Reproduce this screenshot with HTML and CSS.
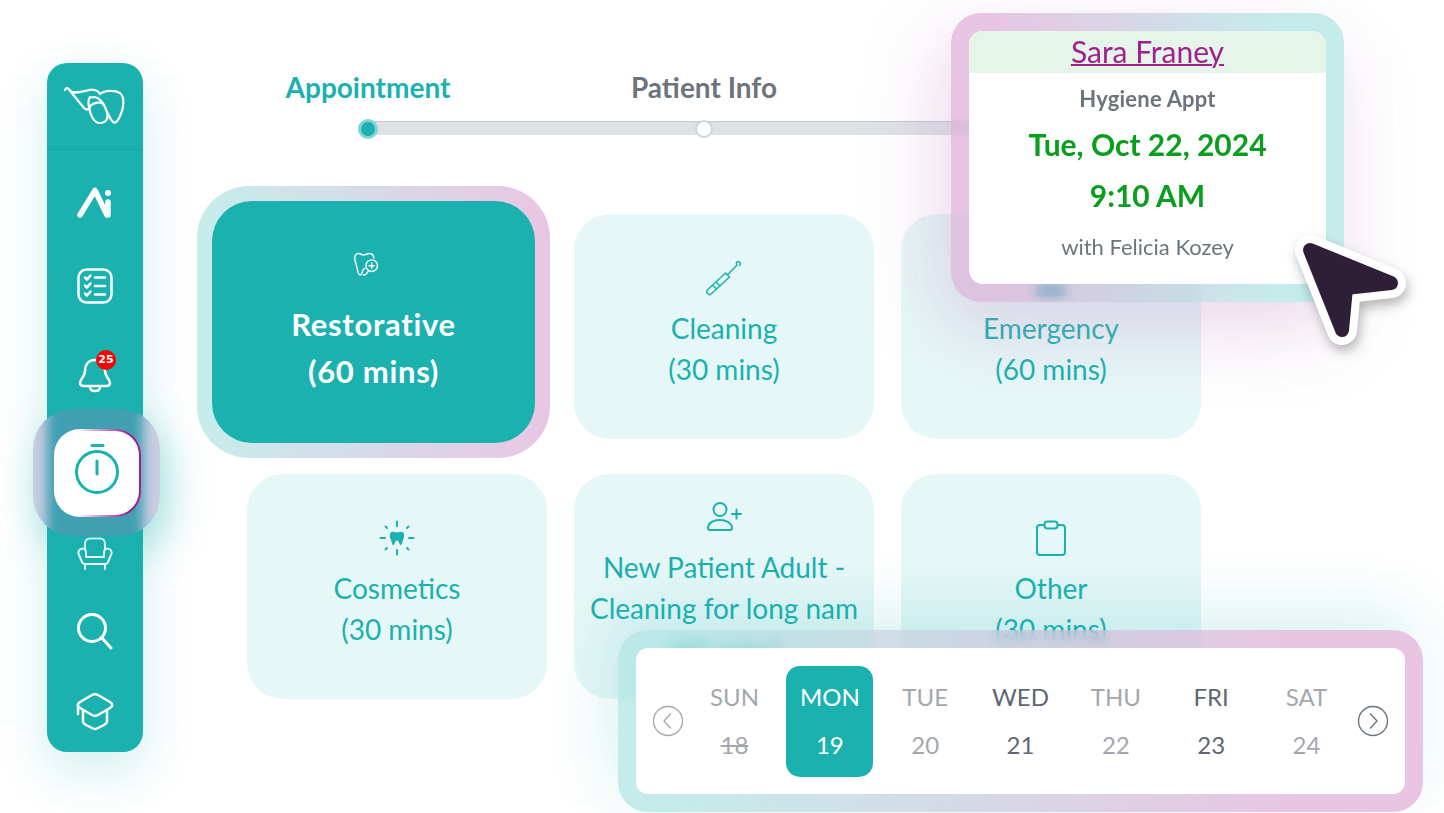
FILE: index.html
```html
<!DOCTYPE html>
<html lang="en">
<head>
  <meta charset="UTF-8">
  <meta name="viewport" content="width=device-width, initial-scale=1.0">
  <link rel="stylesheet" href="styles.css">
  <title>Book Appointment</title>
</head>
<body>
<div class="page">

  <!-- Sidebar -->
  <aside class="sidebar">
    <div class="sidebar-logo">
      <svg class="logo-icon" viewBox="0 0 64 44">
        <path d="M2 6C3 3 5 4 7 6.500C11 12 16 18 21 24C23 26 25 26 27 24"/>
        <path d="M7 7C12 10 18 8 24 6.500C29 4.500 35 6 37 10C42 6 52 6 57 9C62 13 61 24 57 32C55 37 52 40 50 38C47 35 46 31 44 28"/>
        <path d="M27 13C25 16 25 19 26 23C27 31 31 39 37 39C43 39 46 34 44 28C42 21 37 14 32 13C29 13 27 13 26 15"/>
        <path d="M26 23C31 18 38 17 41 21"/>
      </svg>
    </div>
    <nav class="sidebar-nav">
      <svg class="nav-icon icon-ai" viewBox="0 0 36 32">
        <path d="M3 28L18 3.500L30 28M31 15V28"/>
        <circle cx="31" cy="6" r="3" class="solid"/>
      </svg>
      <svg class="nav-icon icon-tasks" viewBox="0 0 36 36">
        <rect x="1.500" y="1.500" width="33" height="33" rx="8"/>
        <path d="M8 9.500l2 2 3.500-4M8 17.500l2 2 3.500-4M8 25.500l2 2 3.500-4M18 9.500h10M18 18h10M18 26.500h10"/>
      </svg>
      <div class="bell-wrap">
        <svg class="nav-icon icon-bell" viewBox="0 0 34 38">
          <path d="M17 5C10 5 7 10 7 16C7 22 2 24 2 28C2 30 4 31 6 31H28C30 31 32 30 32 28C32 24 27 22 27 16C27 10 24 5 17 5Z"/>
          <path d="M12 32C12 35 14 36 17 36C20 36 22 35 22 32"/>
        </svg>
        <span class="badge">25</span>
      </div>
      <div class="nav-active">
        <div class="nav-active-tile">
          <svg class="timer-icon" viewBox="0 0 48 56">
            <path d="M19 3.500H30M24 19V32"/>
            <circle cx="24" cy="30" r="20.500"/>
          </svg>
        </div>
      </div>
      <svg class="nav-icon icon-chair" viewBox="0 0 36 33">
        <path d="M8 13V7C8 3.500 10 1.500 13 1.500H23C26 1.500 28 3.500 28 7V13"/>
        <path d="M9 20H27V15C27 12 30 11 32 12C35 13 35 16 34 18L31 25C30.500 26.500 29 27 28 27H8C7 27 5.500 26.500 5 25L2 18C1 16 1 13 4 12C6 11 9 12 9 15V20Z"/>
        <path d="M8 27V32M28 27V32"/>
      </svg>
      <svg class="nav-icon icon-search" viewBox="0 0 36 38">
        <circle cx="15" cy="15" r="13.500"/>
        <path d="M25 25L34 35"/>
      </svg>
      <svg class="nav-icon icon-grad" viewBox="0 0 38 38">
        <path d="M16 2C18 1 20 1 22 2L34 9C37 11 37 13 34 15L22 22C20 23 18 23 16 22L4 15C1 13 1 11 4 9L16 2Z"/>
        <path d="M7 18V28C7 30 8 31 10 32L17 35.500C18 36 20 36 21 35.500L28 32C30 31 31 30 31 28V18M2 12V21"/>
      </svg>
    </nav>
  </aside>

  <main class="content">
    <!-- Step indicator -->
    <div class="step-labels">
      <div class="step-label step-current">Appointment</div>
      <div class="step-label">Patient Info</div>
    </div>
    <div class="step-track">
      <span class="step-dot step-dot-current"></span>
      <span class="step-dot"></span>
    </div>

    <!-- Appointment types -->
    <div class="type-grid">
      <div class="type-selected">
        <div class="type-selected-inner">
          <svg class="type-icon-small" viewBox="0 0 24 24">
            <path d="M20 6C19.500 3 18 1.500 15.500 1.500C13 1.500 12 3 9.500 3C7.500 3 7 1.500 4.500 1.500C1.500 1.500 .500 4 .800 7C1.200 11 3 14 3.500 18C4 21 5 23 6.500 23C8.500 23 8 17 10.500 16.500M9.500 23C11 23 13 21.500 14 19.500"/>
            <circle cx="17.700" cy="13.700" r="5.800"/>
            <path d="M17.700 11V16.400M15 13.700H20.400"/>
          </svg>
          <div class="type-name">Restorative<br>(60 mins)</div>
        </div>
      </div>

      <div class="type-card">
        <svg class="type-icon type-icon-thin" viewBox="0 0 36 36">
          <path d="M.800 30.500L19.500 13L23.500 17L4.500 34.500C3 35.500 -.500 32 .800 30.500ZM6.500 25L10.500 29M10 22L14 26M21.500 15L31 5C30 3 30 2 32 1.500C34 1.500 35 3.500 33.500 5.500"/>
        </svg>
        <div class="type-name">Cleaning<br>(30 mins)</div>
      </div>

      <div class="type-card">
        <svg class="type-icon" viewBox="0 0 36 36">
          <path class="solid" d="M3 24H33V36H3Z"/>
          <path d="M18 6V18M12 12H24"/>
        </svg>
        <div class="type-name">Emergency<br>(60 mins)</div>
      </div>

      <div class="type-card">
        <svg class="type-icon" viewBox="0 0 36 36">
          <path class="solid" d="M12.500 12C15 11 16.500 12.500 18 12.500C19.500 12.500 21 11 23.500 12C25.500 13 25.500 17 24 20C23 23 23 25 21.500 25C20 25 20.500 20.500 18 20.500C15.500 20.500 16 25 14.500 25C13 25 13 23 12 20C10.500 17 10.500 13 12.500 12Z"/>
          <path d="M18 1.500V6M18 30V34.500M1.500 18H6M30 18H34.500M6.500 6.500L8 8M28 28L29.500 29.500M29.500 6.500L28 8M6.500 29.500L8 28"/>
        </svg>
        <div class="type-name">Cosmetics<br>(30 mins)</div>
      </div>

      <div class="type-card">
        <svg class="type-icon" viewBox="0 0 36 36">
          <circle cx="14" cy="10.500" r="6.500"/>
          <path d="M2 29C2 24 7 21 14 21C20 21 26 24 26 29C26 30.500 25 31 24 31H4C3 31 2 30.500 2 29ZM26 15H35M30.500 10.500V19.500"/>
        </svg>
        <div class="type-name">New Patient Adult -<br>Cleaning for long nam<br>(60 mins)</div>
      </div>

      <div class="type-card">
        <svg class="type-icon" viewBox="0 0 36 36">
          <path d="M11 5H7C5 5 4 6 4 8V32C4 34 5 35 7 35H29C31 35 32 34 32 32V8C32 6 31 5 29 5H25"/>
          <rect x="11.500" y="1.500" width="13" height="7" rx="3"/>
        </svg>
        <div class="type-name">Other<br>(30 mins)</div>
      </div>
    </div>
  </main>

  <!-- Floating appointment card -->
  <div class="float-appt">
    <div class="appt-inner">
      <div class="appt-head"><a class="appt-patient">Sara Franey</a></div>
      <div class="appt-kind">Hygiene Appt</div>
      <div class="appt-when">Tue, Oct 22, 2024</div>
      <div class="appt-when">9:10 AM</div>
      <div class="appt-with">with Felicia Kozey</div>
    </div>
  </div>

  <!-- Cursor -->
  <svg class="cursor" viewBox="0 0 120 120">
    <path class="cursor-edge" d="M20 20L101 53L56 58L52 100Z"/>
    <path class="cursor-fill" d="M20 20L101 53L56 58L52 100Z"/>
  </svg>

  <!-- Floating week picker -->
  <div class="float-week">
    <div class="week-inner">
      <svg class="week-arrow week-arrow-off" viewBox="0 0 32 32">
        <circle cx="16" cy="16" r="14.500"/>
        <path d="M18.500 9L12 16L18.500 23"/>
      </svg>
      <div class="week-days">
        <div class="day day-off"><span>SUN</span><span class="day-struck">18</span></div>
        <div class="day day-selected"><span>MON</span><span>19</span></div>
        <div class="day day-off"><span>TUE</span><span>20</span></div>
        <div class="day"><span>WED</span><span>21</span></div>
        <div class="day day-off"><span>THU</span><span>22</span></div>
        <div class="day"><span>FRI</span><span>23</span></div>
        <div class="day day-off"><span>SAT</span><span>24</span></div>
      </div>
      <svg class="week-arrow" viewBox="0 0 32 32">
        <circle cx="16" cy="16" r="14.500"/>
        <path d="M13.500 9L20 16L13.500 23"/>
      </svg>
    </div>
  </div>

</div>
</body>
</html>
```

FILE: styles.css
```css
* {
  box-sizing: border-box;
}

body {
  margin: 0;
  background-color: #fff;
  font-family: "Lato", "Noto Sans", sans-serif;
}

svg {
  fill: none;
  stroke: currentColor;
  stroke-linecap: round;
  stroke-linejoin: round;
}

svg .solid {
  fill: currentColor;
  stroke: none;
}

.page {
  position: relative;
  display: flex;
  align-items: flex-start;
  width: 1444px;
  height: 813px;
  padding-left: 47px;
  overflow: hidden;
}

/* Sidebar */
.sidebar {
  width: 96px;
  height: 689px;
  margin-top: 63px;
  flex-shrink: 0;
  color: #fff;
  background-color: #1ab1af;
  border-radius: 20px;
  box-shadow: 0 20px 50px rgba(26, 177, 175, 0.2);
}

.sidebar-logo {
  display: flex;
  justify-content: center;
  height: 87px;
  padding-top: 21px;
  border-bottom: 1px solid #17a19f;
}

.logo-icon {
  width: 64px;
  height: 44px;
  stroke-width: 2.2;
}

.sidebar-nav {
  display: flex;
  flex-direction: column;
  align-items: center;
  padding-top: 37px;
}

.nav-icon {
  display: block;
  stroke-width: 2.5;
}

.icon-ai {
  width: 36px;
  height: 32px;
  stroke-width: 5.5;
}

.icon-tasks {
  width: 36px;
  height: 36px;
  margin-top: 49px;
}

.bell-wrap {
  position: relative;
  width: 34px;
  height: 38px;
  margin-top: 51px;
}

.icon-bell {
  width: 34px;
  height: 38px;
}

.badge {
  position: absolute;
  top: -5px;
  left: 18px;
  width: 20px;
  height: 20px;
  color: #fff;
  background-color: #f00;
  border-radius: 50%;
  font-family: "DejaVu Sans", sans-serif;
  font-size: 11px;
  font-weight: 700;
  line-height: 20px;
  text-align: center;
}

.nav-active {
  position: relative;
  width: 87px;
  height: 88px;
  margin: 36px 0 0 4px;
  z-index: 1;
}

.nav-active::before {
  content: "";
  position: absolute;
  inset: -20px -19px -19px -21px;
  background-color: rgba(129, 129, 183, 0.37);
  -webkit-backdrop-filter: blur(6px);
  backdrop-filter: blur(6px);
  border-radius: 40px;
  box-shadow: 8px 14px 40px rgba(26, 177, 175, 0.35);
}

.nav-active-tile {
  position: relative;
  display: flex;
  align-items: center;
  justify-content: center;
  height: 100%;
  background: linear-gradient(#fff, #fff) padding-box, linear-gradient(90deg, #fff 25%, #a0208f 85%) border-box;
  border: 2px solid transparent;
  border-radius: 26px;
}

.timer-icon {
  width: 48px;
  height: 56px;
  margin-top: -6px;
  color: #1ab1af;
  stroke-width: 3;
}

.icon-chair {
  width: 36px;
  height: 33px;
  margin-top: 20px;
  stroke-width: 2;
}

.icon-search {
  width: 36px;
  height: 38px;
  margin-top: 43px;
  stroke-width: 3;
}

.icon-grad {
  width: 38px;
  height: 38px;
  margin-top: 42px;
}

/* Step indicator */
.content {
  width: 954px;
  margin-left: 104px;
  padding-top: 70px;
}

.step-labels {
  display: flex;
  margin-left: -47px;
}

.step-label {
  width: 336px;
  color: #6c757d;
  font-size: 28px;
  font-weight: 700;
  line-height: 34px;
  text-align: center;
}

.step-current {
  color: #1ab1af;
}

.step-track {
  display: flex;
  align-items: center;
  gap: 317px;
  width: 642px;
  height: 14px;
  margin: 17px 0 79px 111px;
  background-color: #dee2e6;
  border-top: 1px solid #c6cacf;
  border-radius: 7px;
}

.step-dot {
  width: 18px;
  height: 18px;
  background-color: #fff;
  border: 2px solid #ced4da;
  border-radius: 50%;
}

.step-dot-current {
  width: 20px;
  height: 20px;
  background-color: #1ab1af;
  border: 3px solid #7fd5d3;
}

/* Appointment types */
.type-grid {
  display: grid;
  grid-template-columns: repeat(3, 300px);
  grid-auto-rows: 225px;
  gap: 35px 27px;
}

.type-card {
  display: flex;
  flex-direction: column;
  align-items: center;
  justify-content: center;
  padding-bottom: 4px;
  color: #1ab1af;
  background-color: #e6f7f7;
  border-radius: 36px;
  overflow: hidden;
}

.type-icon {
  width: 36px;
  height: 36px;
  margin-bottom: 12px;
  flex-shrink: 0;
  stroke-width: 2;
}

.type-icon-thin {
  stroke-width: 1.5;
}

.type-icon-small {
  width: 24px;
  height: 24px;
  margin: 0 15px 25px 0;
  stroke-width: 1.4;
}

.type-name {
  font-size: 28px;
  line-height: 41px;
  text-align: center;
  white-space: nowrap;
}

.type-selected {
  margin: -28px -3px -19px -50px;
  padding: 15px;
  background: linear-gradient(90deg, #c6edeb, #e9c6e3);
  border-radius: 52px;
}

.type-selected-inner {
  display: flex;
  flex-direction: column;
  align-items: center;
  justify-content: center;
  height: 100%;
  padding-top: 2px;
  color: #fff;
  background-color: #1ab1af;
  border-radius: 40px;
}

.type-selected-inner .type-name {
  font-size: 31px;
  font-weight: 700;
  letter-spacing: 0.7px;
  line-height: 47px;
}

/* Floating appointment card */
.float-appt {
  position: absolute;
  top: 13px;
  left: 951px;
  width: 393px;
  height: 289px;
  padding: 18px;
  background: linear-gradient(90deg, rgba(217, 158, 208, 0.6) 10%, rgba(157, 223, 220, 0.6) 85%);
  -webkit-backdrop-filter: blur(6px);
  backdrop-filter: blur(6px);
  border-radius: 30px;
  box-shadow: -20px 20px 70px rgba(190, 130, 190, 0.22), 10px 40px 70px rgba(200, 150, 200, 0.14);
}

.appt-inner {
  height: 100%;
  background-color: #fff;
  border-radius: 14px;
  overflow: hidden;
  text-align: center;
}

.appt-head {
  height: 42px;
  background-color: #e6f5e9;
  line-height: 40px;
}

.appt-patient {
  color: #a0208f;
  font-size: 30px;
  text-decoration: underline;
  text-decoration-thickness: 2px;
}

.appt-kind {
  margin-top: 12px;
  color: #6c757d;
  font-size: 22px;
  font-weight: 700;
  letter-spacing: 0.2px;
  line-height: 28px;
}

.appt-when {
  height: 51px;
  color: #0a9e1e;
  font-size: 30px;
  font-weight: 700;
  line-height: 51px;
}

.appt-when:nth-child(3) {
  margin-top: 6px;
}

.appt-with {
  margin-top: 12px;
  color: #6c757d;
  font-size: 22px;
  line-height: 28px;
}

/* Cursor */
.cursor {
  position: absolute;
  top: 230px;
  left: 1290px;
  width: 120px;
  height: 120px;
  overflow: visible;
  filter: drop-shadow(2px 6px 6px rgba(0, 0, 0, 0.28));
}

.cursor-edge {
  stroke: #fff;
  stroke-width: 30;
}

.cursor-fill {
  fill: #2e1f36;
  stroke: #2e1f36;
  stroke-width: 14;
}

/* Floating week picker */
.float-week {
  position: absolute;
  top: 630px;
  left: 618px;
  width: 805px;
  height: 182px;
  padding: 18px;
  background: linear-gradient(90deg, rgba(157, 223, 220, 0.6) 5%, rgba(217, 158, 208, 0.6) 85%);
  -webkit-backdrop-filter: blur(6px);
  backdrop-filter: blur(6px);
  border-radius: 30px;
  box-shadow: -10px -20px 60px rgba(26, 177, 175, 0.16);
}

.week-inner {
  display: flex;
  align-items: center;
  height: 100%;
  padding: 0 16px;
  background-color: #fff;
  border-radius: 12px;
}

.week-arrow {
  width: 32px;
  height: 32px;
  flex-shrink: 0;
  color: #6c757d;
  stroke-width: 1.4;
}

.week-arrow-off {
  color: #a6abb0;
}

.week-days {
  display: grid;
  grid-template-columns: repeat(7, 87px);
  column-gap: 8.330px;
  margin: 0 auto;
}

.day {
  display: flex;
  flex-direction: column;
  align-items: center;
  gap: 14px;
  height: 111px;
  padding-top: 14px;
  color: #5f6771;
  font-size: 24px;
  line-height: 34px;
}

.day-off {
  color: #a3a8ae;
}

.day-struck {
  text-decoration: line-through;
}

.day-selected {
  color: #fff;
  background-color: #1ab1af;
  border-radius: 14px;
}
```
